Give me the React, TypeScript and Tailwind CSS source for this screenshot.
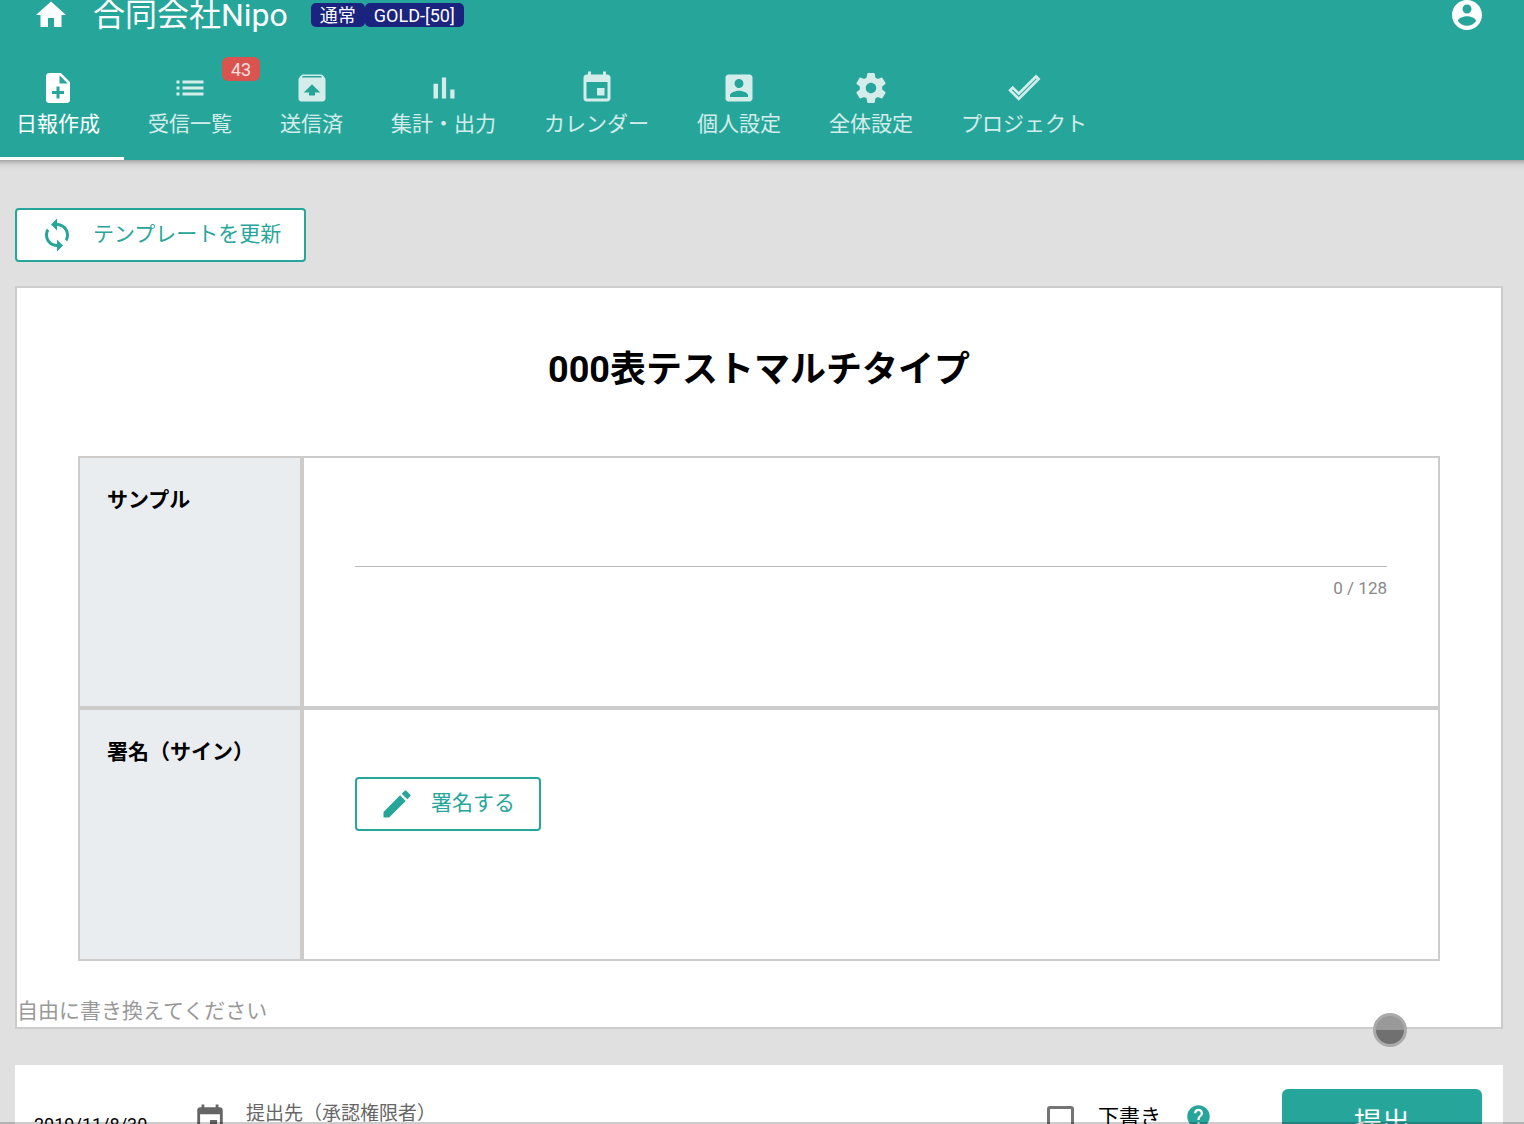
import type { ReactNode } from "react";

const FONT = "font-['Roboto','Noto_Sans_CJK_JP',sans-serif]";

const ICONS = {
  home: "M10 20v-6h4v6h5v-8h3L12 3 2 12h3v8z",
  noteAdd:
    "M14 2H6c-1.1 0-1.99.9-1.99 2L4 20c0 1.1.89 2 1.99 2H18c1.1 0 2-.9 2-2V8l-6-6zm2 14h-3v3h-2v-3H8v-2h3v-3h2v3h3v2zm-3-7V3.5L18.5 9H13z",
  list: "M3 13h2v-2H3v2zm0 4h2v-2H3v2zm0-8h2V7H3v2zm4 4h14v-2H7v2zm0 4h14v-2H7v2zM7 7v2h14V7H7z",
  unarchive:
    "M20.55 5.22l-1.39-1.68C18.88 3.21 18.47 3 18 3H6c-.47 0-.88.21-1.15.55L3.46 5.22C3.17 5.57 3 6.01 3 6.5V19c0 1.1.89 2 2 2h14c1.1 0 2-.9 2-2V6.5c0-.49-.17-.93-.45-1.28zM12 9.5l5.5 5.5H14v2h-4v-2H6.5L12 9.5zM5.12 5l.82-1h12l.93 1H5.12z",
  barChart: "M5 9.2h3V19H5zM10.6 5h2.8v14h-2.8zm5.6 8H19v6h-2.8z",
  event:
    "M17 12h-5v5h5v-5zM16 1v2H8V1H6v2H5c-1.11 0-1.99.9-1.99 2L3 19c0 1.1.89 2 2 2h14c1.1 0 2-.9 2-2V5c0-1.1-.9-2-2-2h-1V1h-2zm3 18H5V8h14v11z",
  accountBox:
    "M3 5v14c0 1.1.89 2 2 2h14c1.1 0 2-.9 2-2V5c0-1.1-.9-2-2-2H5c-1.11 0-2 .9-2 2zm12 4c0 1.66-1.34 3-3 3s-3-1.34-3-3 1.34-3 3-3 3 1.34 3 3zm-9 8c0-2 4-3.1 6-3.1s6 1.1 6 3.1v1H6v-1z",
  settings:
    "M19.43 12.98c.04-.32.07-.64.07-.98s-.03-.66-.07-.98l2.11-1.65c.19-.15.24-.42.12-.64l-2-3.46c-.12-.22-.39-.3-.61-.22l-2.49 1c-.52-.4-1.08-.73-1.69-.98l-.38-2.65C14.46 2.18 14.25 2 14 2h-4c-.25 0-.46.18-.49.42l-.38 2.65c-.61.25-1.17.59-1.69.98l-2.49-1c-.23-.09-.49 0-.61.22l-2 3.46c-.13.22-.07.49.12.64l2.11 1.65c-.04.32-.07.65-.07.98s.03.66.07.98l-2.11 1.65c-.19.15-.24.42-.12.64l2 3.46c.12.22.39.3.61.22l2.49-1c.52.4 1.08.73 1.69.98l.38 2.65c.03.24.24.42.49.42h4c.25 0 .46-.18.49-.42l.38-2.65c.61-.25 1.17-.59 1.69-.98l2.49 1c.23.09.49 0 .61-.22l2-3.46c.12-.22.07-.49-.12-.64l-2.11-1.65zM12 15.5c-1.93 0-3.5-1.57-3.5-3.5s1.57-3.5 3.5-3.5 3.5 1.57 3.5 3.5-1.57 3.5-3.5 3.5z",
  check: "M1.5 13.5l3-3 4 4L20 3l3 3L8.5 20.5z M4 13.5l4.5 4.5L20.5 6 20 5.6 8.5 17l-4-4z",
  account:
    "M12 2C6.48 2 2 6.48 2 12s4.48 10 10 10 10-4.48 10-10S17.52 2 12 2zm0 3c1.66 0 3 1.34 3 3s-1.34 3-3 3-3-1.34-3-3 1.34-3 3-3zm0 14.2c-2.5 0-4.71-1.28-6-3.22.03-1.99 4-3.08 6-3.08 1.99 0 5.97 1.09 6 3.08-1.29 1.94-3.5 3.22-6 3.22z",
  sync: "M12 4V1L8 5l4 4V6c3.31 0 6 2.69 6 6 0 1.01-.25 1.97-.7 2.8l1.46 1.46C19.54 15.03 20 13.57 20 12c0-4.42-3.58-8-8-8zm0 14c-3.31 0-6-2.69-6-6 0-1.01.25-1.97.7-2.8L5.24 7.74C4.46 8.97 4 10.43 4 12c0 4.42 3.58 8 8 8v3l4-4-4-4v3z",
  edit: "M3 17.25V21h3.75L17.81 9.94l-3.75-3.75L3 17.25zM20.71 7.04c.39-.39.39-1.02 0-1.41l-2.34-2.34c-.39-.39-1.02-.39-1.41 0l-1.83 1.83 3.75 3.75 1.83-1.83z",
  help: "M12 2C6.48 2 2 6.48 2 12s4.48 10 10 10 10-4.48 10-10S17.52 2 12 2zm1 17h-2v-2h2v2zm2.07-7.75l-.9.92C13.45 12.9 13 13.5 13 15h-2v-.5c0-1.1.45-2.1 1.17-2.83l1.24-1.26c.37-.36.59-.86.59-1.41 0-1.1-.9-2-2-2s-2 .9-2 2H8c0-2.21 1.79-4 4-4s4 1.79 4 4c0 .88-.36 1.68-.93 2.25z",
};

function Icon({ d, className }: { d: string; className: string }) {
  return (
    <svg viewBox="0 0 24 24" fill="currentColor" fillRule="evenodd" className={className}>
      <path d={d} />
    </svg>
  );
}

const tabs = [
  { label: "日報作成", icon: ICONS.noteAdd, active: true },
  { label: "受信一覧", icon: ICONS.list, badge: "43" },
  { label: "送信済", icon: ICONS.unarchive },
  { label: "集計・出力", icon: ICONS.barChart },
  { label: "カレンダー", icon: ICONS.event },
  { label: "個人設定", icon: ICONS.accountBox },
  { label: "全体設定", icon: ICONS.settings },
  { label: "プロジェクト", icon: ICONS.check },
];

function Header() {
  return (
    <header className="h-[160px] shrink-0 bg-[#26a69a] text-white">
      <div className="flex h-[30px] items-center pl-[33px] pr-[39px]">
        <Icon d={ICONS.home} className="h-9 w-9" />
        <span className="ml-6 text-[32px] leading-none">合同会社Nipo</span>
        <span className="ml-[23px] flex h-6 items-center rounded-[5px] bg-[#1a237e] px-[9px] text-[18px]">通常</span>
        <span className="flex h-6 items-center rounded-[5px] bg-[#1a237e] px-[9px] text-[18px]">GOLD-[50]</span>
        <Icon d={ICONS.account} className="ml-auto h-9 w-9" />
      </div>
      <nav className="-ml-2 mt-[40px] flex h-[90px]">
        {tabs.map((t) => (
          <div
            key={t.label}
            className={`relative flex flex-col items-center border-b-[3px] px-6 ${
              t.active ? "border-white text-white" : "border-transparent text-white/80"
            }`}
          >
            <Icon d={t.icon} className="h-9 w-9 shrink-0" />
            <span className="mt-[2px] whitespace-nowrap text-[21px] leading-[32px]">{t.label}</span>
            {t.badge && (
              <span className="absolute right-[-4px] top-[-13px] flex h-6 w-[38px] items-center justify-center rounded-[6px] bg-[#d9534f] text-[18px] text-white/80">
                {t.badge}
              </span>
            )}
          </div>
        ))}
      </nav>
    </header>
  );
}

function OutlineButton({ icon, className, children }: { icon: string; className: string; children: ReactNode }) {
  return (
    <div className={`flex h-[54px] items-center rounded-[4px] border-2 border-[#26a69a] bg-white text-[21px] text-[#26a69a] ${className}`}>
      <Icon d={icon} className="h-9 w-9 shrink-0" />
      <span className="whitespace-nowrap">{children}</span>
    </div>
  );
}

function Row({ label, className, children }: { label: string; className: string; children: ReactNode }) {
  return (
    <div className={`flex ${className}`}>
      <div className="w-[224px] shrink-0 border-r-4 border-[#ccc] bg-[#eaedf0] pl-[27px] pt-[26px] text-[21px] font-bold leading-[32px] text-black">
        {label}
      </div>
      <div className="flex-1 px-[51px]">{children}</div>
    </div>
  );
}

export default function App() {
  return (
    <div className={`relative flex h-[1124px] flex-col overflow-hidden bg-[#e0e0e0] ${FONT}`}>
      <Header />
      <div className="h-[10px] shrink-0 bg-gradient-to-b from-[#a8a8a8] via-[#d6d6d6] to-[#dedede]" />

      <main className="flex-1 px-[15px] pt-[38px]">
        <OutlineButton icon={ICONS.sync} className="w-[291px] gap-[18px] pl-[22px]">
          テンプレートを更新
        </OutlineButton>

        <section className="mt-6 h-[743px] w-[1488px] border-2 border-[#ccc] bg-white">
          <h1 className="mt-[60px] text-center text-[36px] font-bold leading-[44px] text-black">000表テストマルチタイプ</h1>
          <div className="mx-[61px] mt-[64px] border-2 border-[#ccc]">
            <Row label="サンプル" className="h-[248px]">
              <div className="mt-[108px] border-b border-[#bbb]" />
              <div className="mt-[11px] text-right text-[17px] leading-[20px] text-[#888]">0 / 128</div>
            </Row>
            <div className="h-1 bg-[#ccc]" />
            <Row label="署名（サイン）" className="h-[249px]">
              <OutlineButton icon={ICONS.edit} className="mt-[67px] w-[186px] gap-[16px] pl-[22px]">
                署名する
              </OutlineButton>
            </Row>
          </div>
          <p className="mt-[34px] text-[21px] leading-[32px] text-[#999]">自由に書き換えてください</p>
        </section>

        <section className="mt-9 flex h-[120px] w-[1488px] items-start bg-white">
          <span className="ml-[19px] mt-[49px] w-[159px] text-[18px] leading-[22px] text-black">2019/11/8/30</span>
          <Icon d={ICONS.event} className="mt-[38px] h-[34px] w-[34px] text-[#666]" />
          <span className="ml-[19px] mt-[37px] text-[19px] leading-[24px] text-[#666]">提出先（承認権限者）</span>
          <div className="ml-[611px] mt-[41px] h-[27px] w-[27px] rounded-[3px] border-[3px] border-[#757575]" />
          <span className="ml-[24px] mt-[36px] text-[21px] leading-[32px] text-black">下書き</span>
          <Icon d={ICONS.help} className="ml-[24px] mt-[38px] h-[27px] w-[27px] text-[#26a69a]" />
          <div className="ml-[70px] mt-6 flex h-[70px] w-[200px] items-center justify-center rounded-[6px] bg-[#26a69a] text-[28px] text-white">
            提出
          </div>
        </section>
      </main>

      {/* loading dot sits over the card edge */}
      <div className="absolute left-[1373px] top-[1013px] h-[34px] w-[34px] rounded-full border-[3px] border-[#aaa] bg-[linear-gradient(#999_50%,#707070_50%)]" />
      <div className="absolute inset-x-0 bottom-0 h-[2px] bg-black/20" />
    </div>
  );
}
